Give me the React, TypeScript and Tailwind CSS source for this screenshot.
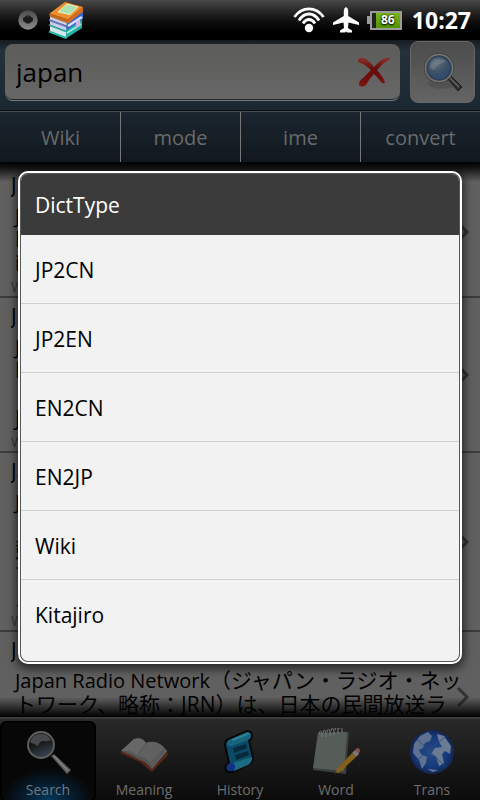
import React from "react";

const font = "font-['Open_Sans','Noto_Sans_CJK_JP',sans-serif]";

const entries = [
  { title: "Japan", latin: "Japan", lines: ["", "In", "in"], source: "Wikipedia" },
  { title: "Japan Airlines", latin: "Japan Airlines", lines: ["", "In", "", "JAL"], source: "Wikipedia" },
  { title: "Japan Cup", latin: "Japan Cup", lines: ["", "", "競馬", "で", "ズ"], source: "Wikipedia" },
  {
    title: "Japan Radio Network",
    latin: "Japan Radio Network",
    lines: ["（ジャパン・ラジオ・ネッ", "トワーク、略称：JRN）は、日本の民間放送ラ", ""],
    source: "",
  },
];

const modes = ["Wiki", "mode", "ime", "convert"];
const dictTypes = ["JP2CN", "JP2EN", "EN2CN", "EN2JP", "Wiki", "Kitajiro"];

function TrackballIcon() {
  return (
    <svg viewBox="0 0 20 20" className="size-5" aria-hidden="true">
      <defs>
        <linearGradient id="ball" x2="0" y2="1">
          <stop stopColor="#4c4c4c" />
          <stop offset="1" stopColor="#8c8c8c" />
        </linearGradient>
      </defs>
      <circle cx="10" cy="10" r="9.7" fill="url(#ball)" />
      <rect x="5" y="7" width="10" height="5" rx="2" fill="#1a1a1a" />
      <rect x="7" y="5.500" width="6" height="8" rx="2" fill="#1a1a1a" />
      <circle cx="10" cy="7" r=".8" fill="#444" />
    </svg>
  );
}

function BooksIcon() {
  return (
    <svg viewBox="0 0 36 38" className="h-[38px] w-9" aria-hidden="true">
      <path d="M2 14l17 6v17.500L2 31z" fill="#c9cfe6" />
      <path d="M2 24.500l16 6v6L2 30z" fill="#d5e6e6" />
      <path d="M1 18.500l18 6.500M1 19.500l18 6.500" stroke="#5a68b8" />
      <path d="M1 24l17 6.500" stroke="#1f9f9c" strokeWidth="1.500" />
      <path d="M1 30.500l17 6.500" stroke="#25b5a4" strokeWidth="2" />
      <path d="M18 29l16-11v9L18 37.500z" fill="#27b0a6" />
      <path d="M19 32l14-9" stroke="#a5ede0" strokeWidth="1.500" />
      <path d="M19 21l16-11v8L18 29.500z" fill="#3568c9" />
      <path d="M20 25l14-9" stroke="#d3e1ff" strokeWidth="2.500" />
      <path d="M28 21l4-3v6l-4 3z" fill="#d2b3e4" />
      <path d="M1.500 12.500L20 18.500v4L1.500 15.500z" fill="#c4681e" />
      <path d="M20 18.500L35 6v4.500L20 22.500z" fill="#d96b1b" />
      <path d="M1.500 12.500L17 1l18 5-15 12.500z" fill="#ef8f2e" />
      <path d="M10 11l9-8 11 3-8 7.500z" fill="#a9e0b4" stroke="#f3f0b8" />
    </svg>
  );
}

function WifiIcon() {
  return (
    <svg viewBox="0 0 32 26" className="h-[26px] w-8" fill="none" stroke="#fff" strokeWidth="2.8" aria-hidden="true">
      <path d="M1.500 10Q7 1.800 16 1.800T30.500 10M6 13.500Q10 7 16 7t10 6.500M10 16.500Q12.500 12.500 16 12.500t6 4" />
      <circle cx="16" cy="21" r="4.200" fill="#fff" stroke="none" />
    </svg>
  );
}

function PlaneIcon() {
  return (
    <svg viewBox="0 0 26 26" className="size-[26px]" fill="#fff" aria-hidden="true">
      <path d="M13 0q2.200 1 2.200 4v5L26 15.500V18l-10.500-2.500L15 21l4 2.500v2h-5l-1-1-1 1H7v-2l4-2.500-.5-5.500L0 18v-2.500L10.800 9V4q0-3 2.200-4z" />
    </svg>
  );
}

function Battery() {
  return (
    <div className="flex items-center">
      <div className="h-2 w-[3px] bg-[#9c9c9c]" />
      <div className="flex h-[19px] w-8 border-2 border-[#9c9c9c] bg-[#222]">
        <div className="w-1" />
        <div className="flex flex-1 items-center justify-center bg-linear-to-b from-[#78b817] to-[#4f9500] text-xs font-bold text-white [text-shadow:0_0_2px_#000,0_1px_2px_#000]">
          86
        </div>
      </div>
    </div>
  );
}

function ClearIcon() {
  return (
    <svg viewBox="0 0 32 30" className="h-[30px] w-8" aria-hidden="true">
      <defs>
        <linearGradient id="clear" x2="0" y2="1">
          <stop stopColor="#8a3430" />
          <stop offset=".4" stopColor="#650a08" />
          <stop offset="1" stopColor="#7b1512" />
        </linearGradient>
      </defs>
      <path
        d="M0 2q4-3 8 0 4 3 8 8 7-8 12-9 3-1 4 0l-1 2q-5 2-12 10 6 7 8 12-1 2-3 1-4-5-8-9-5 5-8 11-4 3-7 0 0-5 4-7l8-8Q7 7 0 5z"
        fill="url(#clear)"
      />
    </svg>
  );
}

function LensIcon() {
  return (
    <svg viewBox="0 0 40 40" className="size-10" aria-hidden="true">
      <defs>
        <radialGradient id="lens" cx=".4" cy=".3">
          <stop stopColor="#62707d" />
          <stop offset=".6" stopColor="#46566a" />
          <stop offset="1" stopColor="#344b69" />
        </radialGradient>
      </defs>
      <ellipse cx="19" cy="31" rx="14" ry="6" fill="#3f3f3f" opacity=".35" />
      <path d="M25 27l3-3 11 11-4 4z" fill="#303030" stroke="#1c1c1c" />
      <path d="M27 26l9 9" stroke="#606060" strokeWidth="1.500" />
      <circle cx="16" cy="16" r="13.500" fill="url(#lens)" stroke="#3c3c3c" strokeWidth="3" />
      <circle cx="16" cy="16" r="13.500" fill="none" stroke="#777" strokeWidth="1.500" />
      <circle cx="16" cy="16" r="11.500" fill="none" stroke="#263e5d" />
      <path d="M7 16q0-8 9-9 6 0 7 3-8 1-12 8z" fill="#7c8790" opacity=".5" />
    </svg>
  );
}

function Chevron() {
  return (
    <svg viewBox="0 0 14 22" className="h-[22px] w-[14px] shrink-0" fill="none" stroke="#333" strokeWidth="3" aria-hidden="true">
      <path d="M2 2l9 9-9 9" />
    </svg>
  );
}

function SearchTabIcon() {
  return (
    <svg viewBox="0 0 48 48" className="size-12" aria-hidden="true">
      <defs>
        <linearGradient id="glass" x2=".4" y2="1">
          <stop stopColor="#1c1f22" />
          <stop offset=".5" stopColor="#161718" />
          <stop offset="1" stopColor="#35404d" />
        </linearGradient>
      </defs>
      <path d="M27 28l3-2 17 16-4 4z" fill="#5c5c5c" />
      <path d="M30 28l14 15" stroke="#8a8a8a" strokeWidth="1.200" />
      <circle cx="17" cy="17" r="13" fill="url(#glass)" stroke="#626262" strokeWidth="1.800" />
      <path d="M6 14q3-9 12-8 6 0 9 6-5 2-8 1-3 0-5 5z" fill="#45494c" />
    </svg>
  );
}

function MeaningTabIcon() {
  return (
    <svg viewBox="0 0 48 48" className="size-12" aria-hidden="true">
      <path d="M0 25l20 9 12 10 16-17-1-4L14 15z" fill="#55281b" />
      <path d="M1 23L14 11q8-3 11 4 8-2 12 0 6 2 10 8L32 41q-5-7-12-9-8-5-19-9z" fill="#555" />
      <path d="M1 23q12-1 16 5l9-13q-3-6-12-4z" fill="#676767" />
      <path d="M17 28q11 0 15 12l15-17q-6-8-12-9-5-1-9 1z" fill="#616161" />
      <path d="M17 28l9-13" stroke="#505050" strokeWidth=".7" />
      <path d="M31 38l15-17M30 36l15-16" stroke="#484848" strokeWidth=".7" />
    </svg>
  );
}

function HistoryTabIcon() {
  return (
    <svg viewBox="0 0 48 48" className="size-12" aria-hidden="true">
      <path d="M9 17q0-5 4-6l18-8q5 0 5 5 0 3-3 4l4 18q0 4-4 6l-14 7q-7 3-9-1-2-5 3-7z" fill="#0a4c68" stroke="#040607" strokeWidth="2" />
      <path d="M11 16q0-4 4-5l16-7q4 0 4 4-1 3-3 4l-16 6q-4 1-5-2z" fill="#19647c" />
      <path d="M16 11l16-6 2 1-17 7z" fill="#2d8496" />
      <path d="M17 20l13-4 1 4-13 5zM19 27l13-4 1 4-13 5z" fill="#08293c" />
      <path d="M17 35l19-6q1 5-4 8l-14 6z" fill="#1b6c80" />
      <circle cx="15" cy="39" r="4" fill="#122f86" />
    </svg>
  );
}

function WordTabIcon() {
  return (
    <svg viewBox="0 0 48 48" className="size-12" aria-hidden="true">
      <path d="M6 5l31-1-3 42-33-4z" fill="#3c403d" />
      <path d="M6 5l29-1-3 39-31-3z" fill="#565d58" />
      <path d="M7 6q1-5 3-1v4m1-4q1-5 3-1v5m1-5q1-5 3-1v5m1-5q1-5 3-1v5m1-5q1-5 3-1v5m1-5q1-5 3-1v5m1-5q2-4 3 0" fill="none" stroke="#7c7c7c" />
      <path d="M23 47l2-6 15-16 4 4-16 15z" fill="#83601b" />
      <path d="M43 22l2-2q3 0 3 3l-2 4z" fill="#85544f" />
      <path d="M40 25l3-3 4 4-3 3z" fill="#777" />
      <path d="M23 47l1-3 2 2z" fill="#151515" />
    </svg>
  );
}

function TransTabIcon() {
  return (
    <svg viewBox="0 0 48 48" className="size-12" aria-hidden="true">
      <defs>
        <radialGradient id="earth">
          <stop stopColor="#2a4a80" />
          <stop offset=".7" stopColor="#153a7c" />
          <stop offset="1" stopColor="#142553" />
        </radialGradient>
      </defs>
      <circle cx="24" cy="24" r="22" fill="url(#earth)" />
      <path d="M6 16l6-8 8-4 4 4-2 5-5 2-2 5-4 2 2 4 6 3-1 6-4 6-3-9-6-7z" fill="#5f7190" />
      <path d="M29 6l7 2 7 10-1 8-5-3-3 3 2 9-5 3-3-9-5-3 4-6 7-1-3-5z" fill="#6b7b94" />
      <path d="M7 34L38 8M9 11l29 28" stroke="#234981" strokeWidth=".8" />
      <path d="M19 41l11 1-5 2z" fill="#6b7b94" />
    </svg>
  );
}

const tabs = [
  { label: "Search", Icon: SearchTabIcon },
  { label: "Meaning", Icon: MeaningTabIcon },
  { label: "History", Icon: HistoryTabIcon },
  { label: "Word", Icon: WordTabIcon },
  { label: "Trans", Icon: TransTabIcon },
];

function StatusBar() {
  return (
    <header className="flex h-10 shrink-0 items-center bg-linear-to-b from-[#484848] via-[#161616] via-45% to-black pl-[18px] pr-[9px]">
      <TrackballIcon />
      <div className="ml-[10px]">
        <BooksIcon />
      </div>
      <div className="ml-auto flex items-center">
        <WifiIcon />
        <div className="ml-2">
          <PlaneIcon />
        </div>
        <div className="ml-2">
          <Battery />
        </div>
        <time className="ml-[10px] text-[23px] font-bold text-white">10:27</time>
      </div>
    </header>
  );
}

function DictDialog() {
  return (
    <div className="absolute inset-x-0 bottom-0 top-10 flex items-center px-[18px] pb-[5px]">
      <section
        role="dialog"
        aria-modal="true"
        aria-labelledby="dict-title"
        className="w-full overflow-hidden rounded-[10px] border-2 border-white shadow-[0_3px_10px_2px_rgba(0,0,0,0.6)]"
      >
        <div className="overflow-hidden rounded-lg border border-[#55585b] bg-[#f2f2f2]">
          <h1 id="dict-title" className="flex h-[61px] items-center bg-[#3b3b3b] px-[14px] pt-[2px] text-[21px] text-white">
            DictType
          </h1>
          <ul className="pb-3">
            {dictTypes.map((type) => (
              <li key={type} className="h-[69px] border-b border-[#cfd1d1] last:border-transparent">
                <button className="flex size-full items-center px-[14px] pt-[3px] text-left text-[21px] text-black">{type}</button>
              </li>
            ))}
          </ul>
        </div>
      </section>
    </div>
  );
}

export default function App() {
  return (
    <div className={`relative flex h-screen flex-col overflow-hidden bg-[#606060] ${font}`}>
      <StatusBar />
      <form className="flex h-[71px] shrink-0 items-start gap-[10px] border-b border-[#0a0e11] bg-linear-to-b from-[#171c21] via-[#25303a] via-15% to-[#1b2831] px-[5px]">
        <div className="mt-1 flex h-[57px] flex-1 items-center rounded-lg border-b border-[#777] bg-linear-to-b from-[#5c5c5a] to-[#676767] pl-[11px] pr-[10px] shadow-[inset_0_-1px_0_#1d2a31]">
          <input aria-label="Search word" defaultValue="japan" className="min-w-0 flex-1 bg-transparent text-[26px] text-black outline-none" />
          <button type="button" aria-label="Clear">
            <ClearIcon />
          </button>
        </div>
        <button
          type="button"
          aria-label="Search"
          className="mt-px flex h-[62px] w-[65px] items-center justify-center rounded-lg border border-[#666] bg-linear-to-b from-[#4c4c4c] to-[#646464]"
        >
          <LensIcon />
        </button>
      </form>
      <nav className="grid h-[51px] shrink-0 grid-cols-4 border-t border-[#424c54] bg-linear-to-b from-[#1c2630] to-[#11181e]">
        {modes.map((mode) => (
          <button key={mode} className="border-l border-[#777] pt-[2px] text-xl text-[#6a6a6a] first:border-transparent">
            {mode}
          </button>
        ))}
      </nav>
      <main className="relative min-h-0 flex-1 overflow-hidden pt-[5px] text-black">
        <ul>
          {entries.map((entry) => (
            <li key={entry.title} className="flex items-center border-b-2 border-[#3c3c3c] pl-[11px] pr-[10px]">
              <article className="min-w-0 flex-1">
                <h2 className="h-9 truncate pt-1 text-[21px] leading-7">{entry.title}</h2>
                <div className="pl-1 text-[21px] leading-6">
                  {entry.lines.map((line, i) => (
                    <p key={i} className="h-6 whitespace-nowrap">
                      {i === 0 && <span className="text-xl leading-6">{entry.latin}</span>}
                      {line}
                    </p>
                  ))}
                </div>
                <p className="h-[21px] text-sm leading-6 text-[#383838]">{entry.source}</p>
              </article>
              <Chevron />
            </li>
          ))}
        </ul>
        <div className="absolute inset-x-0 top-0 h-5 bg-linear-to-b from-black via-black/80 via-30% to-transparent" />
        <div className="absolute inset-x-0 bottom-0 h-5 bg-linear-to-b from-transparent to-black" />
      </main>
      <nav className="grid h-[83px] shrink-0 grid-cols-5 border-t-2 border-[#3b3b3b] bg-linear-to-b from-[#292929] to-[#0b0b0b] pt-[2px]">
        {tabs.map(({ label, Icon }, i) => (
          <button
            key={label}
            aria-current={i === 0 ? "page" : undefined}
            className={`flex flex-col items-center justify-start rounded-md border-2 pt-[5px] text-sm ${
              i === 0
                ? "border-black bg-[radial-gradient(46px_32px_at_bottom,#06385c_0%,#052238_40%,#070707_100%)] text-[#6e7880]"
                : "border-transparent text-[#6e6e6e]"
            }`}
          >
            <Icon />
            <span className="mt-1 leading-5">{label}</span>
          </button>
        ))}
      </nav>
      <DictDialog />
    </div>
  );
}
